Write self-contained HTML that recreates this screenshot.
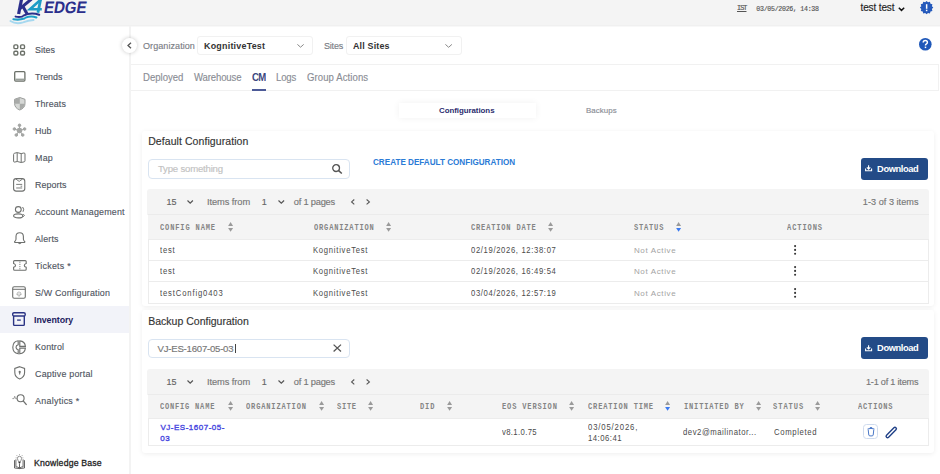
<!DOCTYPE html><html><head><meta charset="utf-8"><style>html,body{margin:0;padding:0;width:940px;height:474px;overflow:hidden;background:#fff;position:relative}*{box-sizing:content-box}</style></head><body>
<div style="position:absolute;left:0px;top:0px;width:940.00px;height:25.00px;background:#f4f4f4"></div>
<div style="position:absolute;left:0px;top:25px;width:940.00px;height:1.00px;background:#f0f0f0"></div>
<div style="position:absolute;left:0px;top:26px;width:940.00px;height:1.00px;background:#f8f8f8"></div>
<svg style="position:absolute;left:0px;top:0px;overflow:visible" width="100" height="26" viewBox="0 0 100 26">
<g transform="translate(2.3 0) skewX(-9.5)"><text x="43.1" y="13.4" font-family="Liberation Sans" font-weight="700" font-size="16.6" fill="#2b2f8c" textLength="42.6" lengthAdjust="spacingAndGlyphs">EDGE</text></g>
<path d="M21.6 -1 L18.6 14" stroke="#2b2f8c" stroke-width="3.2" fill="none"/>
<path d="M20 8.6 L31.5 -1" stroke="#2b2f8c" stroke-width="3" fill="none"/>
<path d="M22.8 6.2 L27 13.8" stroke="#2b2f8c" stroke-width="3" fill="none"/>
<path d="M40.8 -0.5 L30 9.2 L41.8 9.2" stroke="#1f9cc6" stroke-width="2.6" fill="none" stroke-linejoin="miter"/>
<path d="M40.6 -0.5 L37.9 12.8" stroke="#1f9cc6" stroke-width="2.8" fill="none"/>
<path d="M15.6 16.6 Q19 17.4 22.2 16.6" stroke="#2b2f8c" stroke-width="2" fill="none" stroke-linecap="round"/>
<path d="M23.4 15.6 Q31 11.8 39.2 14.8" stroke="#2b2f8c" stroke-width="2" fill="none" stroke-linecap="round"/>
<path d="M13.4 19.2 Q19 20.2 24.4 18.6" stroke="#1e9fc9" stroke-width="2.1" fill="none" stroke-linecap="round"/>
<path d="M25.6 17.6 Q31 15.4 36.4 17.4" stroke="#1e9fc9" stroke-width="2.1" fill="none" stroke-linecap="round"/>
<path d="M10.4 21 Q16 24.6 23 22.4 Q28.5 20.4 33.6 20" stroke="#a6d8ef" stroke-width="1.8" fill="none" stroke-linecap="round"/>
</svg>
<div style="position:absolute;left:737.00px;top:-2px;font:400 6.8px/20px 'Liberation Mono', monospace;color:#555;white-space:nowrap;-webkit-text-stroke:0.15px #555;text-decoration:underline;letter-spacing:-0.920px;">IST</div>
<div style="position:absolute;left:756.30px;top:0px;font:400 6.6px/20px 'Liberation Mono', monospace;color:#555;white-space:nowrap;-webkit-text-stroke:0.15px #555;letter-spacing:-0.290px;">03/05/2026, 14:38</div>
<div style="position:absolute;left:860.50px;top:-2px;font:400 10px/20px 'Liberation Sans', sans-serif;color:#222;white-space:nowrap;-webkit-text-stroke:0.15px #222;letter-spacing:-0.126px;">test test</div>
<svg style="position:absolute;left:898.4px;top:7px;overflow:visible" width="7" height="4.2" viewBox="0 0 7 4.2"><path d="M0.8 0.8 L3.5 3.4 L6.2 0.8" stroke="#111" stroke-width="1.5" fill="none"/></svg>
<svg style="position:absolute;left:919.9px;top:1.4px;overflow:visible" width="13.2" height="13.2" viewBox="0 0 13.2 13.2"><polygon points="13.30,6.60 11.91,8.02 12.40,9.95 10.49,10.49 9.95,12.40 8.02,11.91 6.60,13.30 5.18,11.91 3.25,12.40 2.71,10.49 0.80,9.95 1.29,8.02 -0.10,6.60 1.29,5.18 0.80,3.25 2.71,2.71 3.25,0.80 5.18,1.29 6.60,-0.10 8.02,1.29 9.95,0.80 10.49,2.71 12.40,3.25 11.91,5.18" fill="#2459bb"/><rect x="5.9" y="3.2" width="1.5" height="4.6" fill="#fff"/><rect x="5.9" y="8.7" width="1.5" height="1.5" fill="#fff"/></svg>
<div style="position:absolute;left:129px;top:26px;width:2.00px;height:448.00px;background:#f3f3f3"></div>
<div style="position:absolute;left:0px;top:305.6px;width:129.00px;height:27.00px;background:#f2f3f9"></div>
<div style="position:absolute;left:34.60px;top:40px;font:400 9.9px/20px 'Liberation Sans', sans-serif;color:#50555f;white-space:nowrap;-webkit-text-stroke:0.15px #50555f;transform:scaleX(0.9);transform-origin:0 0;letter-spacing:0.054px;">Sites</div>
<div style="position:absolute;left:34.60px;top:67px;font:400 9.9px/20px 'Liberation Sans', sans-serif;color:#50555f;white-space:nowrap;-webkit-text-stroke:0.15px #50555f;transform:scaleX(0.9);transform-origin:0 0;letter-spacing:0.045px;">Trends</div>
<div style="position:absolute;left:34.60px;top:94px;font:400 9.9px/20px 'Liberation Sans', sans-serif;color:#50555f;white-space:nowrap;-webkit-text-stroke:0.15px #50555f;transform:scaleX(0.9);transform-origin:0 0;letter-spacing:0.129px;">Threats</div>
<div style="position:absolute;left:34.60px;top:121px;font:400 9.9px/20px 'Liberation Sans', sans-serif;color:#50555f;white-space:nowrap;-webkit-text-stroke:0.15px #50555f;transform:scaleX(0.9);transform-origin:0 0;letter-spacing:0.033px;">Hub</div>
<div style="position:absolute;left:34.60px;top:148px;font:400 9.9px/20px 'Liberation Sans', sans-serif;color:#50555f;white-space:nowrap;-webkit-text-stroke:0.15px #50555f;transform:scaleX(0.9);transform-origin:0 0;letter-spacing:0.261px;">Map</div>
<div style="position:absolute;left:34.60px;top:175px;font:400 9.9px/20px 'Liberation Sans', sans-serif;color:#50555f;white-space:nowrap;-webkit-text-stroke:0.15px #50555f;transform:scaleX(0.9);transform-origin:0 0;letter-spacing:0.057px;">Reports</div>
<div style="position:absolute;left:34.60px;top:202px;font:400 9.9px/20px 'Liberation Sans', sans-serif;color:#50555f;white-space:nowrap;-webkit-text-stroke:0.15px #50555f;transform:scaleX(0.9);transform-origin:0 0;letter-spacing:0.198px;">Account Management</div>
<div style="position:absolute;left:34.60px;top:229px;font:400 9.9px/20px 'Liberation Sans', sans-serif;color:#50555f;white-space:nowrap;-webkit-text-stroke:0.15px #50555f;transform:scaleX(0.9);transform-origin:0 0;letter-spacing:0.161px;">Alerts</div>
<div style="position:absolute;left:34.60px;top:256px;font:400 9.9px/20px 'Liberation Sans', sans-serif;color:#50555f;white-space:nowrap;-webkit-text-stroke:0.15px #50555f;transform:scaleX(0.9);transform-origin:0 0;letter-spacing:0.260px;">Tickets *</div>
<div style="position:absolute;left:34.60px;top:283px;font:400 9.9px/20px 'Liberation Sans', sans-serif;color:#50555f;white-space:nowrap;-webkit-text-stroke:0.15px #50555f;transform:scaleX(0.9);transform-origin:0 0;letter-spacing:0.194px;">S/W Configuration</div>
<div style="position:absolute;left:34.20px;top:310px;font:700 9.6px/20px 'Liberation Sans', sans-serif;color:#1d2160;white-space:nowrap;transform:scaleX(0.92);transform-origin:0 0;letter-spacing:-0.062px;">Inventory</div>
<div style="position:absolute;left:34.60px;top:337px;font:400 9.9px/20px 'Liberation Sans', sans-serif;color:#50555f;white-space:nowrap;-webkit-text-stroke:0.15px #50555f;transform:scaleX(0.9);transform-origin:0 0;letter-spacing:0.143px;">Kontrol</div>
<div style="position:absolute;left:34.60px;top:364px;font:400 9.9px/20px 'Liberation Sans', sans-serif;color:#50555f;white-space:nowrap;-webkit-text-stroke:0.15px #50555f;transform:scaleX(0.9);transform-origin:0 0;letter-spacing:0.233px;">Captive portal</div>
<div style="position:absolute;left:34.60px;top:391px;font:400 9.9px/20px 'Liberation Sans', sans-serif;color:#50555f;white-space:nowrap;-webkit-text-stroke:0.15px #50555f;transform:scaleX(0.9);transform-origin:0 0;letter-spacing:0.312px;">Analytics *</div>
<div style="position:absolute;left:34.30px;top:453px;font:400 9.7px/20px 'Liberation Sans', sans-serif;color:#222;white-space:nowrap;-webkit-text-stroke:0.15px #222;transform:scaleX(0.9);transform-origin:0 0;-webkit-text-stroke:0.3px #222;letter-spacing:0.195px;">Knowledge Base</div>
<svg style="position:absolute;left:13px;top:44px;overflow:visible" width="13" height="12" viewBox="0 0 13 12"><g fill="none" stroke="#6b7068" stroke-width="1.4"><rect x="0.9" y="0.9" width="3.9" height="3.7" rx="1.2"/><rect x="7.6" y="0.9" width="3.9" height="3.7" rx="1.2"/><rect x="0.9" y="7.3" width="3.9" height="3.7" rx="1.2"/><rect x="7.6" y="7.3" width="3.9" height="3.7" rx="1.2"/></g></svg>
<svg style="position:absolute;left:13.5px;top:71.2px;overflow:visible" width="12" height="11" viewBox="0 0 12 11"><rect x="0.7" y="0.7" width="10.2" height="9.4" rx="1" fill="none" stroke="#6b7068" stroke-width="1.3"/><rect x="1.3" y="7.6" width="9" height="2" fill="#9aa09a"/></svg>
<svg style="position:absolute;left:13.5px;top:97.3px;overflow:visible" width="12" height="13.5" viewBox="0 0 12 13.5"><path d="M5.8 0.5 L11 2.3 L11 6.5 Q11 11 5.8 13 Q0.6 11 0.6 6.5 L0.6 2.3 Z" fill="#d6d8d6" stroke="#9a9c9a" stroke-width="1"/><path d="M5.8 0.8 L5.8 6.8 L0.8 6.8 L0.8 2.4 Z M5.8 6.8 L10.8 6.8 Q10.5 10.8 5.8 12.7 Z" fill="#a8aaa8"/></svg>
<svg style="position:absolute;left:12.5px;top:123.5px;overflow:visible" width="13" height="13" viewBox="0 0 13 13"><g fill="#a4a6a4" stroke="#a4a6a4" stroke-width="1"><circle cx="6.5" cy="6.5" r="2.4"/><circle cx="6.5" cy="1.3" r="1.3"/><circle cx="1.4" cy="5" r="1.3"/><circle cx="11.6" cy="5" r="1.3"/><circle cx="3.3" cy="11" r="1.3"/><circle cx="9.7" cy="11" r="1.3"/><path d="M6.5 6.5 L6.5 1.3 M6.5 6.5 L1.4 5 M6.5 6.5 L11.6 5 M6.5 6.5 L3.3 11 M6.5 6.5 L9.7 11" fill="none"/></g></svg>
<svg style="position:absolute;left:13.4px;top:151.8px;overflow:visible" width="12.6" height="11" viewBox="0 0 12.6 11"><path d="M0.6 2.4 Q0.6 1.4 1.7 1.2 L4.2 0.6 L8.2 1.6 L10.8 1 Q12 0.8 12 2 L12 8.8 Q12 9.7 11 9.9 L8.2 10.5 L4.2 9.5 L1.7 10.1 Q0.6 10.3 0.6 9.2 Z M4.2 0.6 L4.2 9.5 M8.2 1.6 L8.2 10.5" fill="none" stroke="#6e706e" stroke-width="1"/></svg>
<svg style="position:absolute;left:13.4px;top:178px;overflow:visible" width="12.4" height="13.7" viewBox="0 0 12.4 13.7"><rect x="0.6" y="0.6" width="11.2" height="12.5" rx="2.6" fill="none" stroke="#6e706e" stroke-width="1.1"/><path d="M2.8 1 L6.2 3.4 L9.6 1 M3.2 6.4 L9.2 6.4 M3.2 10 L9.2 10 M7.6 8.2 L9.2 8.2" fill="none" stroke="#6e706e" stroke-width="0.9"/></svg>
<svg style="position:absolute;left:13px;top:205.5px;overflow:visible" width="12" height="12.5" viewBox="0 0 12 12.5"><circle cx="5.3" cy="3.5" r="2.9" fill="none" stroke="#6e706e" stroke-width="1.1"/><ellipse cx="5.2" cy="9.9" rx="4.6" ry="2" fill="none" stroke="#6e706e" stroke-width="1.1"/><path d="M9.6 1 Q11.6 3.2 10 5.8 M10.3 8.2 L11.4 9.4 L10.2 10.8" fill="none" stroke="#6e706e" stroke-width="1"/></svg>
<svg style="position:absolute;left:14px;top:231.5px;overflow:visible" width="11.4" height="13" viewBox="0 0 11.4 13"><path d="M5.7 0.7 Q9.4 0.7 9.4 4.6 L9.4 7.2 Q9.6 8.8 10.8 9.5 Q11 10.5 9.8 10.5 L1.6 10.5 Q0.4 10.5 0.6 9.5 Q1.8 8.8 2 7.2 L2 4.6 Q2 0.7 5.7 0.7 Z" fill="none" stroke="#6e706e" stroke-width="1.1"/><path d="M4.4 10.8 Q5.7 12.6 7 10.8" fill="none" stroke="#6e706e" stroke-width="1.1"/></svg>
<svg style="position:absolute;left:12.6px;top:260.3px;overflow:visible" width="13.8" height="10.8" viewBox="0 0 13.8 10.8"><path d="M1.6 0.6 L12.2 0.6 Q13.2 0.6 13.2 1.6 L13.2 3.5 Q11.3 4 11.3 5.4 Q11.3 6.8 13.2 7.3 L13.2 9.2 Q13.2 10.2 12.2 10.2 L1.6 10.2 Q0.6 10.2 0.6 9.2 L0.6 7.3 Q2.5 6.8 2.5 5.4 Q2.5 4 0.6 3.5 L0.6 1.6 Q0.6 0.6 1.6 0.6 Z" fill="none" stroke="#6e706e" stroke-width="1.1"/><path d="M6.9 1.6 L6.9 9.4" stroke="#6e706e" stroke-width="0.9" stroke-dasharray="1.2 1"/></svg>
<svg style="position:absolute;left:12px;top:285.5px;overflow:visible" width="14" height="13" viewBox="0 0 14 13"><rect x="0.7" y="0.7" width="12.6" height="11.6" rx="1.5" fill="none" stroke="#6e706e" stroke-width="1.1"/><path d="M0.7 3.3 L13.3 3.3" stroke="#6e706e" stroke-width="1"/><circle cx="7" cy="8" r="1.9" fill="none" stroke="#6e706e" stroke-width="0.9" stroke-dasharray="1 0.5"/><circle cx="7" cy="8" r="0.6" fill="#6e706e"/></svg>
<svg style="position:absolute;left:12.4px;top:312.2px;overflow:visible" width="14" height="14.5" viewBox="0 0 14 14.5"><rect x="0.7" y="0.7" width="12.5" height="3.3" rx="1.3" fill="none" stroke="#2a3384" stroke-width="1.4"/><path d="M1.6 4 L1.6 12.6 Q1.6 13.4 2.4 13.4 L11.5 13.4 Q12.3 13.4 12.3 12.6 L12.3 4" fill="none" stroke="#2a3384" stroke-width="1.4"/><path d="M5.1 8.1 L8.8 8.1" stroke="#2a3384" stroke-width="1.3"/></svg>
<svg style="position:absolute;left:12.4px;top:339.7px;overflow:visible" width="14.2" height="14.6" viewBox="0 0 14.2 14.6"><path d="M6.2 0.8 Q1 1.4 0.8 7.3 Q1 13.2 6.2 13.8 L6.2 9.8 Q4 9.2 4 7.3 Q4 5.4 6.2 4.8 Z M7.8 0.8 Q13 1.2 13.4 6.4 L7.8 6.4 Z M7.8 8.2 L13.4 8.2 Q12.8 13.2 7.8 13.8 Z" fill="none" stroke="#6e706e" stroke-width="1.15"/></svg>
<svg style="position:absolute;left:14px;top:366.3px;overflow:visible" width="11.4" height="13.7" viewBox="0 0 11.4 13.7"><path d="M5.7 0.7 L10.6 2.5 L10.6 6.6 Q10.6 11.2 5.7 13 Q0.8 11.2 0.8 6.6 L0.8 2.5 Z" fill="none" stroke="#6e706e" stroke-width="1.1"/><circle cx="5.7" cy="5.9" r="1.1" fill="#6e706e"/><path d="M5.7 6.3 L5.7 8.6" stroke="#6e706e" stroke-width="1.1"/></svg>
<svg style="position:absolute;left:12px;top:394px;overflow:visible" width="15" height="11.5" viewBox="0 0 15 11.5"><circle cx="8.6" cy="4.2" r="3.5" fill="none" stroke="#6e706e" stroke-width="1.15"/><path d="M11.2 6.8 L14.6 10.9" stroke="#6e706e" stroke-width="1.3"/><path d="M0.3 4.6 L2 4.6 L2.7 2.2 L3.6 4.6 L5 4.6" fill="none" stroke="#8a8c8a" stroke-width="0.8"/></svg>
<svg style="position:absolute;left:14px;top:454px;overflow:visible" width="11" height="15" viewBox="0 0 11 15"><g fill="none" stroke="#555" stroke-width="0.9"><path d="M0.5 6.2 L0.5 14 L5.5 14.6 L10.5 14 L10.5 6.2"/><path d="M1.9 5.4 L1.9 12.8 Q4 12.8 5.5 14.2 Q7 12.8 9.1 12.8 L9.1 5.4"/><path d="M5.5 9.5 L5.5 14.4"/></g><path d="M3.4 4.4 Q3.4 2.3 5.5 2.3 Q7.6 2.3 7.6 4.4 Q7.6 5.6 5.5 9.2 Q3.4 5.6 3.4 4.4 Z" fill="none" stroke="#777" stroke-width="0.8"/><circle cx="5.5" cy="8.4" r="0.9" fill="#333"/><path d="M5.5 0 L5.5 1.2 M2.4 1 L3.3 2 M8.6 1 L7.7 2 M1.6 3.8 L2.7 3.8 M9.4 3.8 L8.3 3.8" stroke="#999" stroke-width="0.7"/></svg>
<div style="position:absolute;left:122px;top:37.8px;width:15px;height:15px;border-radius:50%;background:#fff;box-shadow:0 0 4px rgba(0,0,0,0.22)"></div>
<svg style="position:absolute;left:127.3px;top:42px;overflow:visible" width="5" height="7" viewBox="0 0 5 7"><path d="M4 0.7 L1 3.5 L4 6.3" fill="none" stroke="#555" stroke-width="1.3"/></svg>
<div style="position:absolute;left:142.70px;top:36px;font:400 9.8px/20px 'Liberation Sans', sans-serif;color:#7a7d85;white-space:nowrap;-webkit-text-stroke:0.15px #7a7d85;transform:scaleX(0.92);transform-origin:0 0;letter-spacing:0.077px;">Organization</div>
<div style="position:absolute;left:197.3px;top:35.5px;width:116.20px;height:19.80px;border:1px solid #f1f1f1;border-radius:3px;box-sizing:border-box"></div>
<div style="position:absolute;left:203.70px;top:36px;font:700 9.7px/20px 'Liberation Sans', sans-serif;color:#333;white-space:nowrap;transform:scaleX(0.92);transform-origin:0 0;letter-spacing:0.250px;">KognitiveTest</div>
<svg style="position:absolute;left:296.7px;top:43.7px;overflow:visible" width="7.1" height="3.6" viewBox="0 0 7.1 3.6"><path d="M0.4 0.4 L3.55 3.2 L6.7 0.4" fill="none" stroke="#888" stroke-width="1"/></svg>
<div style="position:absolute;left:323.90px;top:36px;font:400 9.8px/20px 'Liberation Sans', sans-serif;color:#7a7d85;white-space:nowrap;-webkit-text-stroke:0.15px #7a7d85;transform:scaleX(0.92);transform-origin:0 0;letter-spacing:-0.229px;">Sites</div>
<div style="position:absolute;left:345.6px;top:36px;width:116.60px;height:19.20px;border:1px solid #f1f1f1;border-radius:3px;box-sizing:border-box"></div>
<div style="position:absolute;left:352.80px;top:36px;font:700 9.7px/20px 'Liberation Sans', sans-serif;color:#333;white-space:nowrap;transform:scaleX(0.92);transform-origin:0 0;letter-spacing:0.188px;">All Sites</div>
<svg style="position:absolute;left:445.2px;top:43.6px;overflow:visible" width="7.3" height="3.8" viewBox="0 0 7.3 3.8"><path d="M0.4 0.4 L3.65 3.3 L6.9 0.4" fill="none" stroke="#888" stroke-width="1"/></svg>
<svg style="position:absolute;left:919.4px;top:38.1px;overflow:visible" width="12.6" height="12.6" viewBox="0 0 12.6 12.6"><circle cx="6.3" cy="6.3" r="6.3" fill="#1f58b9"/><path d="M4.2 4.6 Q4.2 2.4 6.3 2.4 Q8.4 2.4 8.4 4.3 Q8.4 5.5 7.2 6.1 Q6.5 6.5 6.5 7.6" fill="none" stroke="#fff" stroke-width="1.5"/><rect x="5.75" y="8.6" width="1.5" height="1.5" fill="#fff"/></svg>
<div style="position:absolute;left:131px;top:64px;width:808.00px;height:1.00px;background:#f1f1f1"></div>
<div style="position:absolute;left:131px;top:90px;width:808.00px;height:1.00px;background:#f1f1f1"></div>
<div style="position:absolute;left:938px;top:64px;width:1.00px;height:27.00px;background:#f1f1f1"></div>
<div style="position:absolute;left:142.80px;top:68px;font:400 10.4px/20px 'Liberation Sans', sans-serif;color:#8a8d95;white-space:nowrap;-webkit-text-stroke:0.15px #8a8d95;transform:scaleX(0.92);transform-origin:0 0;letter-spacing:-0.004px;">Deployed</div>
<div style="position:absolute;left:193.60px;top:68px;font:400 10.4px/20px 'Liberation Sans', sans-serif;color:#8a8d95;white-space:nowrap;-webkit-text-stroke:0.15px #8a8d95;transform:scaleX(0.92);transform-origin:0 0;letter-spacing:-0.146px;">Warehouse</div>
<div style="position:absolute;left:276.30px;top:68px;font:400 10.4px/20px 'Liberation Sans', sans-serif;color:#8a8d95;white-space:nowrap;-webkit-text-stroke:0.15px #8a8d95;transform:scaleX(0.92);transform-origin:0 0;letter-spacing:-0.161px;">Logs</div>
<div style="position:absolute;left:306.50px;top:68px;font:400 10.4px/20px 'Liberation Sans', sans-serif;color:#8a8d95;white-space:nowrap;-webkit-text-stroke:0.15px #8a8d95;transform:scaleX(0.92);transform-origin:0 0;letter-spacing:0.100px;">Group Actions</div>
<div style="position:absolute;left:251.50px;top:68px;font:700 10.4px/20px 'Liberation Sans', sans-serif;color:#3b4780;white-space:nowrap;transform:scaleX(0.92);transform-origin:0 0;letter-spacing:-0.629px;">CM</div>
<div style="position:absolute;left:251.5px;top:89px;width:14.30px;height:2.00px;background:#4c5a97"></div>
<div style="position:absolute;left:398.9px;top:102.9px;width:137.30px;height:15.20px;background:#fff;box-shadow:0 0 7px rgba(0,0,0,0.06)"></div>
<div style="position:absolute;left:439.00px;top:101px;font:700 7.9px/20px 'Liberation Sans', sans-serif;color:#2b2d6e;white-space:nowrap;letter-spacing:-0.044px;">Configurations</div>
<div style="position:absolute;left:585.90px;top:101px;font:400 7.9px/20px 'Liberation Sans', sans-serif;color:#8a8d95;white-space:nowrap;-webkit-text-stroke:0.15px #8a8d95;letter-spacing:0.101px;">Backups</div>
<div style="position:absolute;left:141.5px;top:131px;width:792.50px;height:175.00px;background:#fff;border-radius:3px;box-shadow:0 1px 5px rgba(0,0,0,0.07)"></div>
<div style="position:absolute;left:148.20px;top:131px;font:400 10.5px/20px 'Liberation Sans', sans-serif;color:#333;white-space:nowrap;-webkit-text-stroke:0.15px #333;letter-spacing:0.073px;">Default Configuration</div>
<div style="position:absolute;left:147.5px;top:159.4px;width:202.00px;height:19.20px;border:1px solid #d9e4f1;border-radius:4px;box-sizing:border-box"></div>
<div style="position:absolute;left:158.00px;top:159px;font:400 9.6px/20px 'Liberation Sans', sans-serif;color:#c2c2c2;white-space:nowrap;-webkit-text-stroke:0.15px #c2c2c2;letter-spacing:-0.206px;">Type something</div>
<svg style="position:absolute;left:331.9px;top:163.6px;overflow:visible" width="10.5" height="10" viewBox="0 0 10.5 10"><circle cx="4.1" cy="4.1" r="3.4" fill="none" stroke="#555" stroke-width="1.3"/><path d="M6.6 6.6 L9.8 9.5" stroke="#555" stroke-width="1.5"/></svg>
<div style="position:absolute;left:373.00px;top:152px;font:700 9.3px/20px 'Liberation Sans', sans-serif;color:#2b7bd6;white-space:nowrap;transform:scaleX(0.8738);transform-origin:0 0;">CREATE DEFAULT CONFIGURATION</div>
<div style="position:absolute;left:860.8px;top:158px;width:67.00px;height:21.70px;background:#234b87;border-radius:3px"></div>
<svg style="position:absolute;left:864.5px;top:165.4px;overflow:visible" width="7.2" height="6.5" viewBox="0 0 7.2 6.5"><path d="M3.6 0.3 L3.6 4 M1.9 2.4 L3.6 4.1 L5.3 2.4 M0.6 3.6 L0.6 5.8 L6.6 5.8 L6.6 3.6" fill="none" stroke="#fff" stroke-width="1.1"/></svg>
<div style="position:absolute;left:877.10px;top:159px;font:700 9.3px/20px 'Liberation Sans', sans-serif;color:#fff;white-space:nowrap;letter-spacing:-0.404px;">Download</div>
<div style="position:absolute;left:147px;top:188.8px;width:781.50px;height:26.00px;background:#f4f4f4;border-radius:3px 3px 0 0"></div>
<div style="position:absolute;left:166.40px;top:192px;font:400 9px/20px 'Liberation Sans', sans-serif;color:#666;white-space:nowrap;-webkit-text-stroke:0.15px #666;">15</div>
<svg style="position:absolute;left:187.1px;top:200.10000000000002px;overflow:visible" width="6.4" height="3.9" viewBox="0 0 6.4 3.9"><path d="M0.5 0.5 L3.2 3.2 L5.9 0.5" fill="none" stroke="#555" stroke-width="1.2"/></svg>
<div style="position:absolute;left:207.00px;top:192px;font:400 9.3px/20px 'Liberation Sans', sans-serif;color:#777;white-space:nowrap;-webkit-text-stroke:0.15px #777;letter-spacing:-0.080px;">Items from</div>
<div style="position:absolute;left:261.80px;top:192px;font:400 9px/20px 'Liberation Sans', sans-serif;color:#666;white-space:nowrap;-webkit-text-stroke:0.15px #666;">1</div>
<svg style="position:absolute;left:278.3px;top:200.10000000000002px;overflow:visible" width="6.6" height="3.9" viewBox="0 0 6.6 3.9"><path d="M0.5 0.5 L3.3 3.2 L6.1 0.5" fill="none" stroke="#555" stroke-width="1.2"/></svg>
<div style="position:absolute;left:293.80px;top:192px;font:400 9.3px/20px 'Liberation Sans', sans-serif;color:#777;white-space:nowrap;-webkit-text-stroke:0.15px #777;letter-spacing:-0.226px;">of 1 pages</div>
<svg style="position:absolute;left:351.3px;top:198.9px;overflow:visible" width="3.8" height="5.8" viewBox="0 0 3.8 5.8"><path d="M3.3 0.5 L0.6 2.9 L3.3 5.3" fill="none" stroke="#555" stroke-width="1.1"/></svg>
<svg style="position:absolute;left:366.1px;top:198.9px;overflow:visible" width="4.1" height="5.8" viewBox="0 0 4.1 5.8"><path d="M0.6 0.5 L3.4 2.9 L0.6 5.3" fill="none" stroke="#555" stroke-width="1.1"/></svg>
<div style="position:absolute;left:862.80px;top:192px;font:400 9.1px/20px 'Liberation Sans', sans-serif;color:#777;white-space:nowrap;-webkit-text-stroke:0.15px #777;letter-spacing:0.044px;">1-3 of 3 items</div>
<div style="position:absolute;left:147.5px;top:215px;width:781.00px;height:88.50px;border:1px solid #ececec;border-top:none;box-sizing:border-box"></div>
<div style="position:absolute;left:147.5px;top:215px;width:781.00px;height:24.50px;background:#f4f4f4"></div>
<div style="position:absolute;left:147.5px;top:214.4px;width:781.00px;height:0.60px;background:#ebebeb"></div>
<div style="position:absolute;left:147.5px;top:239px;width:781.00px;height:1.00px;background:#ececec"></div>
<div style="position:absolute;left:147.5px;top:260.4px;width:781.00px;height:1.00px;background:#ececec"></div>
<div style="position:absolute;left:147.5px;top:281.3px;width:781.00px;height:1.00px;background:#ececec"></div>
<div style="position:absolute;left:160.10px;top:218px;font:700 8.3px/20px 'Liberation Mono', monospace;color:#858585;white-space:nowrap;transform:scaleX(0.85);transform-origin:0 0;letter-spacing:1.004px;">CONFIG NAME</div>
<svg style="position:absolute;left:227.7px;top:222.2px;overflow:visible" width="5.2" height="10" viewBox="0 0 5.2 10"><path d="M0.1 3.9 L2.6 0.1 L5.1 3.9 Z" fill="#9a9a9a"/><path d="M0.1 5.9 L2.6 9.8 L5.1 5.9 Z" fill="#9a9a9a"/></svg>
<div style="position:absolute;left:313.60px;top:218px;font:700 8.3px/20px 'Liberation Mono', monospace;color:#858585;white-space:nowrap;transform:scaleX(0.85);transform-origin:0 0;letter-spacing:0.962px;">ORGANIZATION</div>
<svg style="position:absolute;left:385.9px;top:222.2px;overflow:visible" width="5.2" height="10" viewBox="0 0 5.2 10"><path d="M0.1 3.9 L2.6 0.1 L5.1 3.9 Z" fill="#9a9a9a"/><path d="M0.1 5.9 L2.6 9.8 L5.1 5.9 Z" fill="#9a9a9a"/></svg>
<div style="position:absolute;left:471.00px;top:218px;font:700 8.3px/20px 'Liberation Mono', monospace;color:#858585;white-space:nowrap;transform:scaleX(0.85);transform-origin:0 0;letter-spacing:0.957px;">CREATION DATE</div>
<svg style="position:absolute;left:548px;top:222.2px;overflow:visible" width="5.2" height="10" viewBox="0 0 5.2 10"><path d="M0.1 3.9 L2.6 0.1 L5.1 3.9 Z" fill="#9a9a9a"/><path d="M0.1 5.9 L2.6 9.8 L5.1 5.9 Z" fill="#9a9a9a"/></svg>
<div style="position:absolute;left:634.10px;top:218px;font:700 8.3px/20px 'Liberation Mono', monospace;color:#858585;white-space:nowrap;transform:scaleX(0.85);transform-origin:0 0;letter-spacing:0.940px;">STATUS</div>
<svg style="position:absolute;left:675.7px;top:222.2px;overflow:visible" width="5.2" height="10" viewBox="0 0 5.2 10"><path d="M0.1 3.9 L2.6 0.1 L5.1 3.9 Z" fill="#9a9a9a"/><path d="M0.1 5.9 L2.6 9.8 L5.1 5.9 Z" fill="#3a7af2"/></svg>
<div style="position:absolute;left:787.00px;top:218px;font:700 8.3px/20px 'Liberation Mono', monospace;color:#858585;white-space:nowrap;transform:scaleX(0.85);transform-origin:0 0;letter-spacing:1.071px;">ACTIONS</div>
<div style="position:absolute;left:160.30px;top:240px;font:400 8.5px/20px 'Liberation Sans', sans-serif;color:#4a4a4a;white-space:nowrap;-webkit-text-stroke:0.15px #4a4a4a;transform:scaleX(0.9);transform-origin:0 0;-webkit-text-stroke:0;letter-spacing:0.877px;">test</div>
<div style="position:absolute;left:313.20px;top:240px;font:400 8.5px/20px 'Liberation Sans', sans-serif;color:#4a4a4a;white-space:nowrap;-webkit-text-stroke:0.15px #4a4a4a;transform:scaleX(0.9);transform-origin:0 0;-webkit-text-stroke:0;letter-spacing:0.824px;">KognitiveTest</div>
<div style="position:absolute;left:471.30px;top:240px;font:400 8.5px/20px 'Liberation Sans', sans-serif;color:#4a4a4a;white-space:nowrap;-webkit-text-stroke:0.15px #4a4a4a;transform:scaleX(0.9);transform-origin:0 0;-webkit-text-stroke:0;letter-spacing:0.730px;">02/19/2026, 12:38:07</div>
<div style="position:absolute;left:633.90px;top:241px;font:400 8px/20px 'Liberation Sans', sans-serif;color:#a3a3a3;white-space:nowrap;-webkit-text-stroke:0.15px #a3a3a3;-webkit-text-stroke:0;letter-spacing:0.643px;">Not Active</div>
<svg style="position:absolute;left:793.5px;top:245px;overflow:visible" width="2.2" height="10" viewBox="0 0 2.2 10"><circle cx="1.1" cy="1.1" r="1.05" fill="#333"/><circle cx="1.1" cy="4.9" r="1.05" fill="#333"/><circle cx="1.1" cy="8.7" r="1.05" fill="#333"/></svg>
<div style="position:absolute;left:160.30px;top:261px;font:400 8.5px/20px 'Liberation Sans', sans-serif;color:#4a4a4a;white-space:nowrap;-webkit-text-stroke:0.15px #4a4a4a;transform:scaleX(0.9);transform-origin:0 0;-webkit-text-stroke:0;letter-spacing:0.877px;">test</div>
<div style="position:absolute;left:313.20px;top:261px;font:400 8.5px/20px 'Liberation Sans', sans-serif;color:#4a4a4a;white-space:nowrap;-webkit-text-stroke:0.15px #4a4a4a;transform:scaleX(0.9);transform-origin:0 0;-webkit-text-stroke:0;letter-spacing:0.824px;">KognitiveTest</div>
<div style="position:absolute;left:471.30px;top:261px;font:400 8.5px/20px 'Liberation Sans', sans-serif;color:#4a4a4a;white-space:nowrap;-webkit-text-stroke:0.15px #4a4a4a;transform:scaleX(0.9);transform-origin:0 0;-webkit-text-stroke:0;letter-spacing:0.730px;">02/19/2026, 16:49:54</div>
<div style="position:absolute;left:633.90px;top:262px;font:400 8px/20px 'Liberation Sans', sans-serif;color:#a3a3a3;white-space:nowrap;-webkit-text-stroke:0.15px #a3a3a3;-webkit-text-stroke:0;letter-spacing:0.643px;">Not Active</div>
<svg style="position:absolute;left:793.5px;top:266.1px;overflow:visible" width="2.2" height="10" viewBox="0 0 2.2 10"><circle cx="1.1" cy="1.1" r="1.05" fill="#333"/><circle cx="1.1" cy="4.9" r="1.05" fill="#333"/><circle cx="1.1" cy="8.7" r="1.05" fill="#333"/></svg>
<div style="position:absolute;left:160.30px;top:283px;font:400 8.5px/20px 'Liberation Sans', sans-serif;color:#4a4a4a;white-space:nowrap;-webkit-text-stroke:0.15px #4a4a4a;transform:scaleX(0.9);transform-origin:0 0;-webkit-text-stroke:0;letter-spacing:0.961px;">testConfig0403</div>
<div style="position:absolute;left:313.20px;top:283px;font:400 8.5px/20px 'Liberation Sans', sans-serif;color:#4a4a4a;white-space:nowrap;-webkit-text-stroke:0.15px #4a4a4a;transform:scaleX(0.9);transform-origin:0 0;-webkit-text-stroke:0;letter-spacing:0.824px;">KognitiveTest</div>
<div style="position:absolute;left:471.30px;top:283px;font:400 8.5px/20px 'Liberation Sans', sans-serif;color:#4a4a4a;white-space:nowrap;-webkit-text-stroke:0.15px #4a4a4a;transform:scaleX(0.9);transform-origin:0 0;-webkit-text-stroke:0;letter-spacing:0.730px;">03/04/2026, 12:57:19</div>
<div style="position:absolute;left:633.90px;top:284px;font:400 8px/20px 'Liberation Sans', sans-serif;color:#a3a3a3;white-space:nowrap;-webkit-text-stroke:0.15px #a3a3a3;-webkit-text-stroke:0;letter-spacing:0.643px;">Not Active</div>
<svg style="position:absolute;left:793.5px;top:287.6px;overflow:visible" width="2.2" height="10" viewBox="0 0 2.2 10"><circle cx="1.1" cy="1.1" r="1.05" fill="#333"/><circle cx="1.1" cy="4.9" r="1.05" fill="#333"/><circle cx="1.1" cy="8.7" r="1.05" fill="#333"/></svg>
<div style="position:absolute;left:141.5px;top:310px;width:792.50px;height:142.50px;background:#fff;border-radius:3px;box-shadow:0 1px 5px rgba(0,0,0,0.07)"></div>
<div style="position:absolute;left:148.20px;top:311px;font:400 10.5px/20px 'Liberation Sans', sans-serif;color:#333;white-space:nowrap;-webkit-text-stroke:0.15px #333;letter-spacing:0.010px;">Backup Configuration</div>
<div style="position:absolute;left:147.5px;top:338.6px;width:202.00px;height:19.40px;border:1px solid #d9e4f1;border-radius:4px;box-sizing:border-box"></div>
<div style="position:absolute;left:157.60px;top:339px;font:400 9.6px/20px 'Liberation Sans', sans-serif;color:#777;white-space:nowrap;-webkit-text-stroke:0.15px #777;letter-spacing:-0.234px;">VJ-ES-1607-05-03</div>
<div style="position:absolute;left:234.6px;top:343.8px;width:0.60px;height:9.40px;background:#444"></div>
<svg style="position:absolute;left:333.1px;top:343.9px;overflow:visible" width="8.6" height="8.2" viewBox="0 0 8.6 8.2"><path d="M0.6 0.6 L8 7.6 M8 0.6 L0.6 7.6" stroke="#555" stroke-width="1.3"/></svg>
<div style="position:absolute;left:860.8px;top:337.2px;width:67.00px;height:21.70px;background:#234b87;border-radius:3px"></div>
<svg style="position:absolute;left:864.5px;top:344.59999999999997px;overflow:visible" width="7.2" height="6.5" viewBox="0 0 7.2 6.5"><path d="M3.6 0.3 L3.6 4 M1.9 2.4 L3.6 4.1 L5.3 2.4 M0.6 3.6 L0.6 5.8 L6.6 5.8 L6.6 3.6" fill="none" stroke="#fff" stroke-width="1.1"/></svg>
<div style="position:absolute;left:877.10px;top:338px;font:700 9.3px/20px 'Liberation Sans', sans-serif;color:#fff;white-space:nowrap;letter-spacing:-0.404px;">Download</div>
<div style="position:absolute;left:147px;top:368.8px;width:781.50px;height:26.00px;background:#f4f4f4;border-radius:3px 3px 0 0"></div>
<div style="position:absolute;left:166.40px;top:372px;font:400 9px/20px 'Liberation Sans', sans-serif;color:#666;white-space:nowrap;-webkit-text-stroke:0.15px #666;">15</div>
<svg style="position:absolute;left:187.1px;top:380.1px;overflow:visible" width="6.4" height="3.9" viewBox="0 0 6.4 3.9"><path d="M0.5 0.5 L3.2 3.2 L5.9 0.5" fill="none" stroke="#555" stroke-width="1.2"/></svg>
<div style="position:absolute;left:207.00px;top:372px;font:400 9.3px/20px 'Liberation Sans', sans-serif;color:#777;white-space:nowrap;-webkit-text-stroke:0.15px #777;letter-spacing:-0.080px;">Items from</div>
<div style="position:absolute;left:261.80px;top:372px;font:400 9px/20px 'Liberation Sans', sans-serif;color:#666;white-space:nowrap;-webkit-text-stroke:0.15px #666;">1</div>
<svg style="position:absolute;left:278.3px;top:380.1px;overflow:visible" width="6.6" height="3.9" viewBox="0 0 6.6 3.9"><path d="M0.5 0.5 L3.3 3.2 L6.1 0.5" fill="none" stroke="#555" stroke-width="1.2"/></svg>
<div style="position:absolute;left:293.80px;top:372px;font:400 9.3px/20px 'Liberation Sans', sans-serif;color:#777;white-space:nowrap;-webkit-text-stroke:0.15px #777;letter-spacing:-0.226px;">of 1 pages</div>
<svg style="position:absolute;left:351.3px;top:378.90000000000003px;overflow:visible" width="3.8" height="5.8" viewBox="0 0 3.8 5.8"><path d="M3.3 0.5 L0.6 2.9 L3.3 5.3" fill="none" stroke="#555" stroke-width="1.1"/></svg>
<svg style="position:absolute;left:366.1px;top:378.90000000000003px;overflow:visible" width="4.1" height="5.8" viewBox="0 0 4.1 5.8"><path d="M0.6 0.5 L3.4 2.9 L0.6 5.3" fill="none" stroke="#555" stroke-width="1.1"/></svg>
<div style="position:absolute;left:866.00px;top:372px;font:400 9.1px/20px 'Liberation Sans', sans-serif;color:#777;white-space:nowrap;-webkit-text-stroke:0.15px #777;letter-spacing:-0.202px;">1-1 of 1 items</div>
<div style="position:absolute;left:147.5px;top:394.3px;width:781.00px;height:52.20px;border:1px solid #ececec;border-top:none;box-sizing:border-box"></div>
<div style="position:absolute;left:147.5px;top:394.3px;width:781.00px;height:23.80px;background:#f4f4f4"></div>
<div style="position:absolute;left:147.5px;top:394.3px;width:781.00px;height:0.60px;background:#ebebeb"></div>
<div style="position:absolute;left:147.5px;top:417.6px;width:781.00px;height:1.00px;background:#ececec"></div>
<div style="position:absolute;left:160.30px;top:397px;font:700 8.3px/20px 'Liberation Mono', monospace;color:#858585;white-space:nowrap;transform:scaleX(0.85);transform-origin:0 0;letter-spacing:0.921px;">CONFIG NAME</div>
<svg style="position:absolute;left:228px;top:401px;overflow:visible" width="5.2" height="10" viewBox="0 0 5.2 10"><path d="M0.1 3.9 L2.6 0.1 L5.1 3.9 Z" fill="#9a9a9a"/><path d="M0.1 5.9 L2.6 9.8 L5.1 5.9 Z" fill="#9a9a9a"/></svg>
<div style="position:absolute;left:245.80px;top:397px;font:700 8.3px/20px 'Liberation Mono', monospace;color:#858585;white-space:nowrap;transform:scaleX(0.85);transform-origin:0 0;letter-spacing:0.984px;">ORGANIZATION</div>
<svg style="position:absolute;left:318.6px;top:401px;overflow:visible" width="5.2" height="10" viewBox="0 0 5.2 10"><path d="M0.1 3.9 L2.6 0.1 L5.1 3.9 Z" fill="#9a9a9a"/><path d="M0.1 5.9 L2.6 9.8 L5.1 5.9 Z" fill="#9a9a9a"/></svg>
<div style="position:absolute;left:336.50px;top:397px;font:700 8.3px/20px 'Liberation Mono', monospace;color:#858585;white-space:nowrap;transform:scaleX(0.85);transform-origin:0 0;letter-spacing:0.850px;">SITE</div>
<svg style="position:absolute;left:368.4px;top:401px;overflow:visible" width="5.2" height="10" viewBox="0 0 5.2 10"><path d="M0.1 3.9 L2.6 0.1 L5.1 3.9 Z" fill="#9a9a9a"/><path d="M0.1 5.9 L2.6 9.8 L5.1 5.9 Z" fill="#9a9a9a"/></svg>
<div style="position:absolute;left:419.80px;top:397px;font:700 8.3px/20px 'Liberation Mono', monospace;color:#858585;white-space:nowrap;transform:scaleX(0.85);transform-origin:0 0;letter-spacing:1.001px;">DID</div>
<svg style="position:absolute;left:446.9px;top:401px;overflow:visible" width="5.2" height="10" viewBox="0 0 5.2 10"><path d="M0.1 3.9 L2.6 0.1 L5.1 3.9 Z" fill="#9a9a9a"/><path d="M0.1 5.9 L2.6 9.8 L5.1 5.9 Z" fill="#9a9a9a"/></svg>
<div style="position:absolute;left:502.10px;top:397px;font:700 8.3px/20px 'Liberation Mono', monospace;color:#858585;white-space:nowrap;transform:scaleX(0.85);transform-origin:0 0;letter-spacing:0.980px;">EOS VERSION</div>
<svg style="position:absolute;left:569.2px;top:401px;overflow:visible" width="5.2" height="10" viewBox="0 0 5.2 10"><path d="M0.1 3.9 L2.6 0.1 L5.1 3.9 Z" fill="#9a9a9a"/><path d="M0.1 5.9 L2.6 9.8 L5.1 5.9 Z" fill="#9a9a9a"/></svg>
<div style="position:absolute;left:587.70px;top:397px;font:700 8.3px/20px 'Liberation Mono', monospace;color:#858585;white-space:nowrap;transform:scaleX(0.85);transform-origin:0 0;letter-spacing:0.987px;">CREATION TIME</div>
<svg style="position:absolute;left:665px;top:401px;overflow:visible" width="5.2" height="10" viewBox="0 0 5.2 10"><path d="M0.1 3.9 L2.6 0.1 L5.1 3.9 Z" fill="#9a9a9a"/><path d="M0.1 5.9 L2.6 9.8 L5.1 5.9 Z" fill="#3a7af2"/></svg>
<div style="position:absolute;left:683.50px;top:397px;font:700 8.3px/20px 'Liberation Mono', monospace;color:#858585;white-space:nowrap;transform:scaleX(0.85);transform-origin:0 0;letter-spacing:0.962px;">INITIATED BY</div>
<svg style="position:absolute;left:755.6px;top:401px;overflow:visible" width="5.2" height="10" viewBox="0 0 5.2 10"><path d="M0.1 3.9 L2.6 0.1 L5.1 3.9 Z" fill="#9a9a9a"/><path d="M0.1 5.9 L2.6 9.8 L5.1 5.9 Z" fill="#9a9a9a"/></svg>
<div style="position:absolute;left:773.40px;top:397px;font:700 8.3px/20px 'Liberation Mono', monospace;color:#858585;white-space:nowrap;transform:scaleX(0.85);transform-origin:0 0;letter-spacing:1.128px;">STATUS</div>
<svg style="position:absolute;left:815.1px;top:401px;overflow:visible" width="5.2" height="10" viewBox="0 0 5.2 10"><path d="M0.1 3.9 L2.6 0.1 L5.1 3.9 Z" fill="#9a9a9a"/><path d="M0.1 5.9 L2.6 9.8 L5.1 5.9 Z" fill="#9a9a9a"/></svg>
<div style="position:absolute;left:857.60px;top:397px;font:700 8.3px/20px 'Liberation Mono', monospace;color:#858585;white-space:nowrap;transform:scaleX(0.85);transform-origin:0 0;letter-spacing:0.953px;">ACTIONS</div>
<div style="position:absolute;left:160.50px;top:418px;font:400 8px/20px 'Liberation Sans', sans-serif;color:#4747e0;white-space:nowrap;-webkit-text-stroke:0.15px #4747e0;-webkit-text-stroke:0.35px #4747e0;letter-spacing:0.503px;">VJ-ES-1607-05-</div>
<div style="position:absolute;left:160.30px;top:429px;font:400 8px/20px 'Liberation Sans', sans-serif;color:#4747e0;white-space:nowrap;-webkit-text-stroke:0.15px #4747e0;letter-spacing:0.5px;-webkit-text-stroke:0.35px #4747e0;">03</div>
<div style="position:absolute;left:502.10px;top:422px;font:400 8.6px/20px 'Liberation Sans', sans-serif;color:#4a4a4a;white-space:nowrap;-webkit-text-stroke:0.15px #4a4a4a;transform:scaleX(0.9);transform-origin:0 0;-webkit-text-stroke:0;letter-spacing:0.383px;">v8.1.0.75</div>
<div style="position:absolute;left:587.70px;top:417px;font:400 8.6px/20px 'Liberation Sans', sans-serif;color:#4a4a4a;white-space:nowrap;-webkit-text-stroke:0.15px #4a4a4a;transform:scaleX(0.9);transform-origin:0 0;-webkit-text-stroke:0;letter-spacing:0.946px;">03/05/2026,</div>
<div style="position:absolute;left:587.70px;top:428px;font:400 8.6px/20px 'Liberation Sans', sans-serif;color:#4a4a4a;white-space:nowrap;-webkit-text-stroke:0.15px #4a4a4a;transform:scaleX(0.9);transform-origin:0 0;-webkit-text-stroke:0;letter-spacing:0.551px;">14:06:41</div>
<div style="position:absolute;left:683.40px;top:422px;font:400 8.6px/20px 'Liberation Sans', sans-serif;color:#4a4a4a;white-space:nowrap;-webkit-text-stroke:0.15px #4a4a4a;transform:scaleX(0.9);transform-origin:0 0;-webkit-text-stroke:0;letter-spacing:0.587px;">dev2@mailinator...</div>
<div style="position:absolute;left:773.60px;top:422px;font:400 8.6px/20px 'Liberation Sans', sans-serif;color:#4a4a4a;white-space:nowrap;-webkit-text-stroke:0.15px #4a4a4a;transform:scaleX(0.9);transform-origin:0 0;-webkit-text-stroke:0;letter-spacing:0.718px;">Completed</div>
<div style="position:absolute;left:863.2px;top:423.8px;width:14.60px;height:15.00px;border:1px solid #cfdbee;border-radius:3.5px;box-sizing:border-box;background:#fff"></div>
<svg style="position:absolute;left:866.6px;top:426.8px;overflow:visible" width="8" height="9.5" viewBox="0 0 8 9.5"><path d="M0.6 2 Q4 0.8 7.4 2 M2.8 1.5 Q2.8 0.4 4 0.4 Q5.2 0.4 5.2 1.5 M1.2 2.6 L1.8 8 Q2 8.9 3 8.9 L5 8.9 Q6 8.9 6.2 8 L6.8 2.6" fill="none" stroke="#4a78c8" stroke-width="1"/></svg>
<svg style="position:absolute;left:884.5px;top:425.5px;overflow:visible" width="12.5" height="12.5" viewBox="0 0 12.5 12.5"><rect x="-0.4" y="5.05" width="13.3" height="2.9" rx="1.45" transform="rotate(-45 6.25 6.5)" fill="none" stroke="#1f4087" stroke-width="1.4"/></svg>
</body></html>
